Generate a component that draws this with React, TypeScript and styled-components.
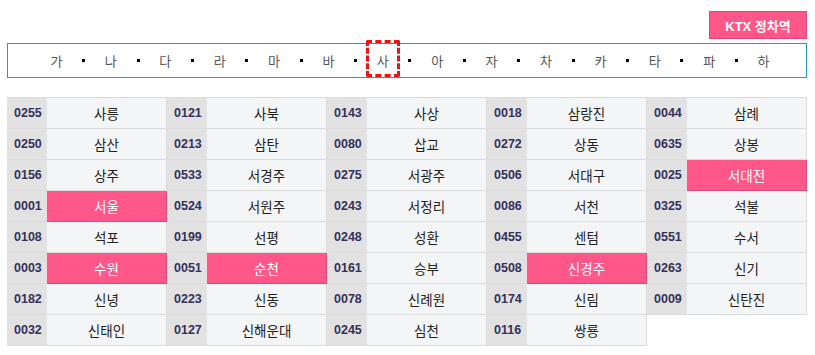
import React from "react";
import styled, { createGlobalStyle } from "styled-components";

const Global = createGlobalStyle`
  html, body { margin: 0; padding: 0; background: #fff; }
  body { font-family: "Liberation Sans", "Noto Sans CJK KR", sans-serif; }
  * { box-sizing: border-box; }
`;

const Page = styled.div`
  width: 815px;
  padding: 11px 8px 0 7px;
`;

const Header = styled.div`
  display: flex;
  justify-content: flex-end;
`;

const KtxButton = styled.button`
  width: 98px;
  height: 28px;
  padding: 0;
  background: #ff578a;
  border: 1px solid #e0467a;
  color: #fff;
  font-family: "Liberation Sans", "Noto Sans CJK KR", sans-serif;
  font-size: 13px;
  font-weight: bold;
  cursor: pointer;
`;

const IndexBar = styled.div`
  margin-top: 4px;
  height: 35px;
  border: 1px solid #1a9bd7;
  display: flex;
  justify-content: center;
  align-items: center;
  padding-left: 6px;
`;

const Letter = styled.a<{ $active?: boolean }>`
  width: 34px;
  align-self: flex-end;
  height: ${(p) => (p.$active ? "37px" : "33px")};
  display: flex;
  align-items: center;
  justify-content: center;
  padding-top: ${(p) => (p.$active ? "4px" : "0")};
  font-family: "Noto Sans CJK KR", sans-serif;
  font-size: 13px;
  color: #555;
  text-decoration: none;
  border: ${(p) => (p.$active ? "3px dashed #f01010" : "none")};
  border-radius: ${(p) => (p.$active ? "2px" : "0")};
`;

const Sep = styled.span`
  width: 20.4px;
  display: flex;
  justify-content: center;
  &::before {
    content: "";
    width: 3px;
    height: 3px;
    background: #000;
  }
`;

const Grid = styled.div`
  margin-top: 20px;
  display: grid;
  grid-template-columns: repeat(5, 160px);
  grid-auto-rows: 31px;
`;

const Item = styled.div<{ $row: number }>`
  display: grid;
  grid-template-columns: 40px 1fr;
  border-top: ${(p) => (p.$row === 0 ? "1px solid #dcdcdc" : "none")};
  ${(p) => (p.$row === 0 ? "margin-top: -1px; height: 32px;" : "")}
`;

const Code = styled.span`
  background: #e2e2e2;
  border-bottom: 1px solid #dcdcdc;
  display: flex;
  align-items: center;
  padding-left: 7px;
  font-family: "Liberation Sans", sans-serif;
  font-weight: bold;
  font-size: 12.5px;
  color: #35305a;
`;

const Name = styled.span<{ $on?: boolean }>`
  background: ${(p) => (p.$on ? "#ff578a" : "#f4f5f7")};
  border-bottom: 1px solid ${(p) => (p.$on ? "#dc4a7c" : "#dcdcdc")};
  border-right: 1px solid ${(p) => (p.$on ? "#dc4a7c" : "#dcdcdc")};
  display: flex;
  align-items: center;
  justify-content: center;
  font-family: "Noto Sans CJK KR", sans-serif;
  font-size: 13.5px;
  color: ${(p) => (p.$on ? "#fff" : "#222")};
`;

const letters = ["가", "나", "다", "라", "마", "바", "사", "아", "자", "차", "카", "타", "파", "하"];

const stations: [string, string, boolean?][] = [
  ["0255", "사릉"], ["0121", "사북"], ["0143", "사상"], ["0018", "삼랑진"], ["0044", "삼례"],
  ["0250", "삼산"], ["0213", "삼탄"], ["0080", "삽교"], ["0272", "상동"], ["0635", "상봉"],
  ["0156", "상주"], ["0533", "서경주"], ["0275", "서광주"], ["0506", "서대구"], ["0025", "서대전", true],
  ["0001", "서울", true], ["0524", "서원주"], ["0243", "서정리"], ["0086", "서천"], ["0325", "석불"],
  ["0108", "석포"], ["0199", "선평"], ["0248", "성환"], ["0455", "센텀"], ["0551", "수서"],
  ["0003", "수원", true], ["0051", "순천", true], ["0161", "승부"], ["0508", "신경주", true], ["0263", "신기"],
  ["0182", "신녕"], ["0223", "신동"], ["0078", "신례원"], ["0174", "신림"], ["0009", "신탄진"],
  ["0032", "신태인"], ["0127", "신해운대"], ["0245", "심천"], ["0116", "쌍룡"],
];

export default function App() {
  return (
    <Page>
      <Global />
      <Header>
        <KtxButton>KTX 정차역</KtxButton>
      </Header>
      <IndexBar>
        {letters.map((l, i) => (
          <React.Fragment key={l}>
            {i > 0 && <Sep />}
            <Letter href="#" $active={l === "사"}>{l}</Letter>
          </React.Fragment>
        ))}
      </IndexBar>
      <Grid>
        {stations.map(([code, name, on], i) => (
          <Item key={code} $row={Math.floor(i / 5)}>
            <Code>{code}</Code>
            <Name $on={on}>{name}</Name>
          </Item>
        ))}
      </Grid>
    </Page>
  );
}
